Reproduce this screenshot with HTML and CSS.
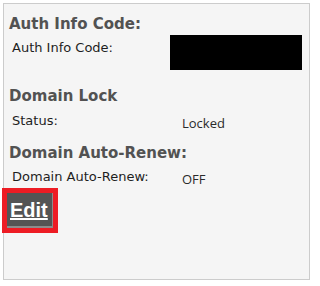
FILE: index.html
```html
<!DOCTYPE html>
<html>
<head>
<meta charset="utf-8">
<link rel="stylesheet" href="styles.css">
</head>
<body>
<div class="panel">
  <h3 class="heading first">Auth Info Code:</h3>
  <div class="row row-code">
    <div class="label">Auth Info Code:</div>
    <div class="value"><div class="redacted"></div></div>
  </div>
  <h3 class="heading lock">Domain Lock</h3>
  <div class="row row-status">
    <div class="label">Status:</div>
    <div class="value text">Locked</div>
  </div>
  <h3 class="heading renew">Domain Auto-Renew:</h3>
  <div class="row row-renew">
    <div class="label">Domain Auto-Renew:</div>
    <div class="value text">OFF</div>
  </div>
  <div class="actions">
    <a class="edit-btn" href="#">Edit</a>
  </div>
</div>
</body>
</html>
```
FILE: styles.css
```css
html, body {
  margin: 0;
  padding: 0;
  background: #ffffff;
}
body {
  padding: 3px;
}
.panel {
  box-sizing: border-box;
  width: 307px;
  height: 277px;
  border: 1px solid #cccccc;
  background: #f5f5f5;
  padding: 0 3px;
}
.heading {
  margin: 0;
  padding-left: 2px;
  font-family: "DejaVu Sans", Verdana, sans-serif;
  font-weight: bold;
  font-size: 15px;
  line-height: 18px;
  color: #525252;
}
.heading.first { margin-top: 11px; }
.heading.lock { margin-top: 17px; }
.heading.renew { margin-top: 13px; }
.row {
  display: flex;
  align-items: flex-start;
}
.row-code { margin-top: 2px; }
.row-status { margin-top: 8px; }
.row-renew { margin-top: 7px; }
.label {
  width: 158px;
  padding-left: 5px;
  font-family: "DejaVu Sans", Verdana, sans-serif;
  font-size: 13px;
  line-height: 15px;
  color: #1e1e1e;
}
.row-code .label { padding-top: 5px; }
.value.text {
  padding-left: 12px;
  padding-top: 3px;
  font-family: "Open Sans", sans-serif;
  font-size: 13px;
  line-height: 15px;
  color: #2a2a2a;
}
.redacted {
  width: 132px;
  height: 35px;
  background: #000000;
}
.actions {
  margin-top: 6px;
}
.edit-btn {
  display: inline-block;
  box-sizing: border-box;
  width: 46px;
  height: 35px;
  padding: 6px 0 0 3px;
  background: #545454;
  border-right: 1px solid #8c8c8c;
  border-bottom: 2px solid #8c8c8c;
  outline: 5px solid #ed1c24;
  font-family: "Liberation Sans", Arial, sans-serif;
  font-weight: bold;
  font-size: 20px;
  line-height: 23px;
  color: #ffffff;
  text-decoration: underline;
}
```
